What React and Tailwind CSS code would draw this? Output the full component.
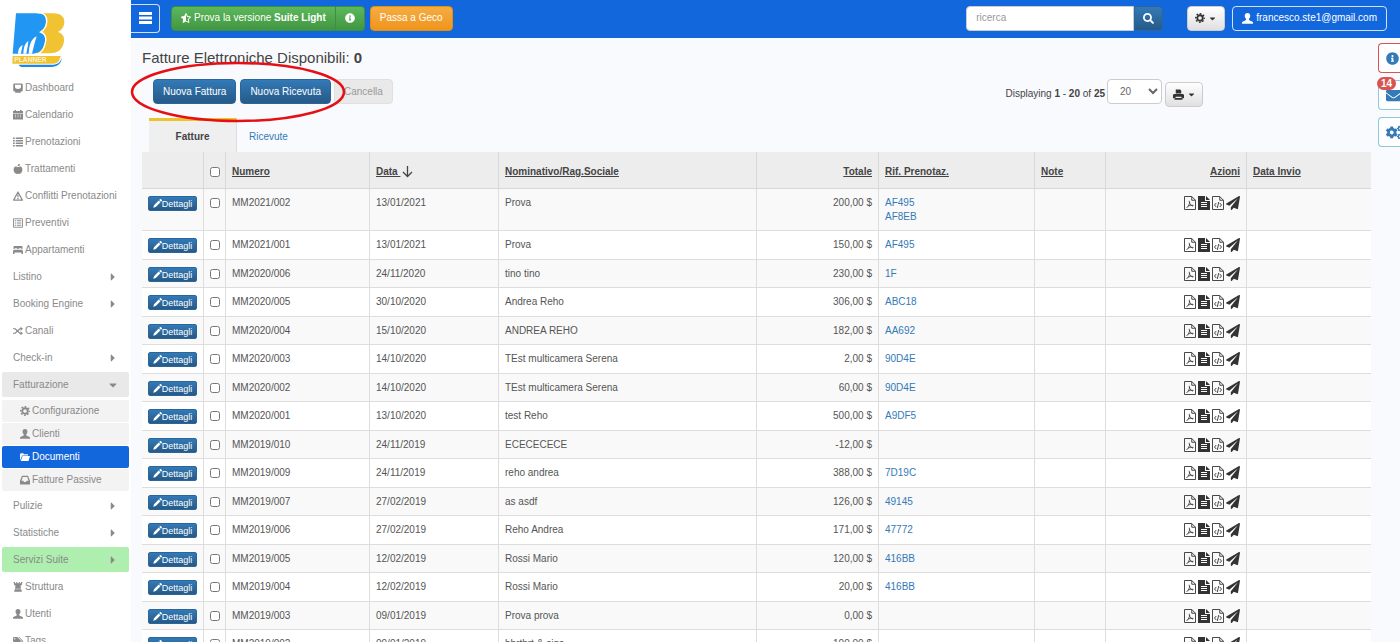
import React, { useState } from "react";
import {
  FaAppleAlt,
  FaCaretDown,
  FaCaretRight,
  FaCogs,
  FaEnvelope,
  FaInfoCircle,
  FaPaperPlane,
  FaSearch,
  FaStarHalfAlt,
  FaTags,
} from "react-icons/fa";

const Glyph = ({ size = 11, children }) => (
  <svg width={size} height={size} viewBox="0 0 20 20" fill="currentColor" className="shrink-0">
    {children}
  </svg>
);

const GearIcon = ({ size }) => (
  <Glyph size={size}>
    <g fill="none" stroke="currentColor">
      <circle cx="10" cy="10" r="5.500" strokeWidth="3.600" />
      <circle cx="10" cy="10" r="8.500" strokeWidth="3" strokeDasharray="3.4 3.276" strokeDashoffset="1.7" />
    </g>
  </Glyph>
);

const UserIcon = ({ size }) => (
  <Glyph size={size}>
    <path d="M10 0c3.100 0 5 2.200 5 5.200 0 2.400-1.100 4.400-2.400 5.400v1.800c0 .8 1.200 1.200 3.200 2 2.500 1 4.200 1.500 4.200 3V19.500H0v-2.100c0-1.500 1.700-2 4.200-3 2-.8 3.200-1.200 3.200-2v-1.800C6.100 9.600 5 7.600 5 5.200 5 2.200 6.900 0 10 0z" />
  </Glyph>
);

const DashboardIcon = ({ size }) => (
  <Glyph size={size}>
    <path
      fillRule="evenodd"
      d="M3 1h14a2.500 2.500 0 0 1 2.500 2.500v11A2.500 2.500 0 0 1 17 17h-2l1 2.500H4L5 17H3a2.500 2.500 0 0 1-2.500-2.500v-11A2.500 2.500 0 0 1 3 1zm1 2.500v4.500c0 2.500 2.500 4 6 4s6-1.500 6-4V3.500z"
    />
  </Glyph>
);

const CalendarIcon = ({ size }) => (
  <Glyph size={size}>
    <path d="M0 2h3V0h3v2h8V0h3v2h3v4.500H0z" />
    <path
      fillRule="evenodd"
      d="M0 7.500h20V19H0zM4 9.500v1.500h2V9.500zm5 0v1.500h2V9.500zm5 0v1.500h2V9.500zM4 13v1.500h2V13zm5 0v1.500h2V13zm5 0v1.500h2V13z"
    />
  </Glyph>
);

const ListIcon = ({ size }) => (
  <Glyph size={size}>
    <path d="M0 1h3.500v3H0zM5.500 1H20v3H5.500zM0 6h3.500v3H0zM5.500 6H20v3H5.500zM0 11h3.500v3H0zM5.500 11H20v3H5.500zM0 16h3.500v3H0zM5.500 16H20v3H5.500z" />
  </Glyph>
);

const WarningIcon = ({ size }) => (
  <Glyph size={size}>
    <path d="M10 2 18.800 18.200H1.200z" fill="none" stroke="currentColor" strokeWidth="2.400" strokeLinejoin="round" />
    <path d="M8.500 7h3l-.6 6H9.100zM8.700 14h2.600v2.600H8.700z" />
  </Glyph>
);

const ListAltIcon = ({ size }) => (
  <Glyph size={size}>
    <path d="M1 1.500h18v17H1z" fill="none" stroke="currentColor" strokeWidth="1.800" />
    <path d="M3.500 4.500h3v2.200h-3zM8 4.500h8.500v2.200H8zM3.500 8.900h3v2.200h-3zM8 8.900h8.500v2.200H8zM3.500 13.300h3v2.200h-3zM8 13.300h8.500v2.200H8z" />
  </Glyph>
);

const BedIcon = ({ size }) => (
  <Glyph size={size}>
    <path d="M2.500 2h15A1.500 1.500 0 0 1 19 3.500V8h-2V6.500h-5.500V8h-3V6.500H3V8H1V3.500A1.500 1.500 0 0 1 2.500 2zM1.500 9.500h17l1.500 3V18h-3v-3H3v3H0v-5.500z" />
  </Glyph>
);

const ShuffleIcon = ({ size }) => (
  <Glyph size={size}>
    <path d="M0 5.500h4.500l9 9H16M0 14.500h4.500l9-9H16" fill="none" stroke="currentColor" strokeWidth="2.400" />
    <path d="M15 1.500 20 5.500l-5 4zM15 10.500l5 4-5 4z" />
  </Glyph>
);

const FolderOpenIcon = ({ size }) => (
  <Glyph size={size}>
    <path d="M0 17V4.500L1.500 2.500h5L8 4.500h8V7H4.500z" />
    <path d="M5.300 8.200H20L17 18H1.500z" />
  </Glyph>
);

const InboxIcon = ({ size }) => (
  <Glyph size={size}>
    <path fillRule="evenodd" d="M4 1.500h12l4 10V19H0v-7.500zM5.500 4 3 11.500h3.500L8 14h4l1.500-2.500H17L14.500 4z" />
  </Glyph>
);

const TowerIcon = ({ size }) => (
  <Glyph size={size}>
    <path d="M1 0h3v2.500h2.500V0h2v2.500h3V0h2v2.500H16V0h3l-1.500 6-2.500 1.500 1 6H4l1-6L2.500 6zM4 14.500h12l1.500 2.500v2.500h-15V17z" />
  </Glyph>
);

const PencilIcon = ({ size }) => (
  <Glyph size={size}>
    <path d="M15.500.5c.7-.6 1.500-.6 2.200 0l1.800 1.800c.6.7.6 1.500 0 2.200l-1.800 1.800-4-4zM12.600 3.400l4 4L6.200 17.800.500 19.500l1.700-5.700z" />
  </Glyph>
);

const PrintIcon = ({ size }) => (
  <Glyph size={size}>
    <path d="M5 1h8l2 2v5H5zM1.500 9h17L20 11v6h-3.500l1 2.500h-15l1-2.500H0v-6z" />
    <path d="M5 14h10l.8 2.500H4.200z" fill="#eee" />
  </Glyph>
);

const BarsIcon = () => (
  <svg width="13" height="12" viewBox="0 0 13 12" fill="currentColor">
    <path d="M0 0h13v3H0zM0 4.500h13v3H0zM0 9h13v3H0z" />
  </svg>
);

// 12x14 document icons
const FileOutline = ({ children }) => (
  <svg width="12" height="14" viewBox="0 0 24 28" fill="none" stroke="currentColor">
    <path d="M1 1h14.500l7.500 7.500V27H1zM15.500 1.200v7.300h7.200" strokeWidth="1.800" strokeLinejoin="round" />
    {children}
  </svg>
);

const FilePdfIcon = () => (
  <FileOutline>
    <path
      d="M10.500 9.500c-.3 4 1.500 8.500 7.500 11M11.500 12c-.5 4.500-3 9-6.500 12M7.500 20.500c3-1.500 7-2.200 11.500-1.700"
      strokeWidth="1.600"
    />
  </FileOutline>
);

const FileCodeIcon = () => (
  <FileOutline>
    <path d="M8.500 14 5 18l3.500 4M15.500 14l3.500 4-3.500 4M13.500 12l-3 12" strokeWidth="1.800" />
  </FileOutline>
);

const FileTextIcon = () => (
  <svg width="12" height="14" viewBox="0 0 24 28" fill="currentColor">
    <path fillRule="evenodd" d="M0 0h14v10h10v18H0zM6 12v2h12v-2zm0 4v2h12v-2zm0 4v2h12v-2z" />
    <path d="M16 0l8 8h-8z" />
  </svg>
);

const Logo = () => (
  <svg width="54" height="56" viewBox="36 36 162 168">
    <path d="M116 40h44c24 0 34 12 33 28-1 13-8 22-20 28 14 4 21 13 19 28-3 23-18 36-42 36h-40z" fill="#f1c232" />
    <path
      d="M48 40h62c22 0 30 10 28 27-1 13-8 23-20 29 13 4 19 13 17 27-3 24-16 38-40 38H38z"
      fill="#2196f3"
    />
    <path
      d="M112 38c22 0 30 12 28 29-1 13-8 23-18 29 11 4 17 13 15 27-3 24-12 34-24 39"
      fill="none"
      stroke="#fff"
      strokeWidth="4"
    />
    <path
      d="M54 161c1-12 3-20 14-26-2 10-4 18-5 26zM70 161c1-18 4-30 15-38-1 14-4 26-6 38zM86 161c2-24 5-42 24-52-6 18-10 36-14 52z"
      fill="#fff"
    />
    <path d="M38 168h144c-4 17-10 23-22 23H37z" fill="#f1c232" />
    <path d="M56 194h104c14 0 22-8 26-22-2 20-14 29-32 29H68c-6 0-10-3-12-7z" fill="#1e88e5" />
    <text x="43" y="187" fontSize="20" fontWeight="700" fill="#fff" fillOpacity=".8">
      PLANNER
    </text>
  </svg>
);

const MENU = [
  { label: "Dashboard", icon: DashboardIcon },
  { label: "Calendario", icon: CalendarIcon },
  { label: "Prenotazioni", icon: ListIcon },
  { label: "Trattamenti", icon: FaAppleAlt },
  { label: "Conflitti Prenotazioni", icon: WarningIcon },
  { label: "Preventivi", icon: ListAltIcon },
  { label: "Appartamenti", icon: BedIcon },
  { label: "Listino", expandable: true },
  { label: "Booking Engine", expandable: true },
  { label: "Canali", icon: ShuffleIcon },
  { label: "Check-in", expandable: true },
  {
    label: "Fatturazione",
    children: [
      { label: "Configurazione", icon: GearIcon },
      { label: "Clienti", icon: UserIcon },
      { label: "Documenti", icon: FolderOpenIcon, active: true },
      { label: "Fatture Passive", icon: InboxIcon },
    ],
  },
  { label: "Pulizie", expandable: true },
  { label: "Statistiche", expandable: true },
  { label: "Servizi Suite", expandable: true, highlight: true },
  { label: "Struttura", icon: TowerIcon },
  { label: "Utenti", icon: UserIcon },
  { label: "Tags", icon: FaTags },
];

const DOCUMENTS = [
  { number: "MM2021/002", date: "13/01/2021", name: "Prova", total: "200,00 $", refs: ["AF495", "AF8EB"] },
  { number: "MM2021/001", date: "13/01/2021", name: "Prova", total: "150,00 $", refs: ["AF495"] },
  { number: "MM2020/006", date: "24/11/2020", name: "tino tino", total: "230,00 $", refs: ["1F"] },
  { number: "MM2020/005", date: "30/10/2020", name: "Andrea Reho", total: "306,00 $", refs: ["ABC18"] },
  { number: "MM2020/004", date: "15/10/2020", name: "ANDREA REHO", total: "182,00 $", refs: ["AA692"] },
  { number: "MM2020/003", date: "14/10/2020", name: "TEst multicamera Serena", total: "2,00 $", refs: ["90D4E"] },
  { number: "MM2020/002", date: "14/10/2020", name: "TEst multicamera Serena", total: "60,00 $", refs: ["90D4E"] },
  { number: "MM2020/001", date: "13/10/2020", name: "test Reho", total: "500,00 $", refs: ["A9DF5"] },
  { number: "MM2019/010", date: "24/11/2019", name: "ECECECECE", total: "-12,00 $", refs: [] },
  { number: "MM2019/009", date: "24/11/2019", name: "reho andrea", total: "388,00 $", refs: ["7D19C"] },
  { number: "MM2019/007", date: "27/02/2019", name: "as asdf", total: "126,00 $", refs: ["49145"] },
  { number: "MM2019/006", date: "27/02/2019", name: "Reho Andrea", total: "171,00 $", refs: ["47772"] },
  { number: "MM2019/005", date: "12/02/2019", name: "Rossi Mario", total: "120,00 $", refs: ["416BB"] },
  { number: "MM2019/004", date: "12/02/2019", name: "Rossi Mario", total: "20,00 $", refs: ["416BB"] },
  { number: "MM2019/003", date: "09/01/2019", name: "Prova prova", total: "0,00 $", refs: [] },
  { number: "MM2019/002", date: "09/01/2019", name: "hbrtbrt & sigs", total: "100,00 $", refs: [] },
];

const blueButton = "bg-linear-to-b from-[#337ab7] to-[#265a88] text-white border border-[#2b669a]";
const grayButton = "border border-[#ccc] bg-linear-to-b from-white to-[#e0e0e0] text-[#333]";
const cell = "border-b border-r border-[#ddd] px-[6px] pt-[7px] align-top last:border-r-0";
const headCell = "border-b border-r border-[#d8d8d8] px-[6px] pt-[3px] font-bold align-middle last:border-r-0";

const Sidebar = () => (
  <aside className="w-[131px] shrink-0 bg-white text-[#8a8a8a]">
    <a href="#home" className="block h-[75px] pt-3 pl-3" aria-label="Planner">
      <Logo />
    </a>
    <nav>
      <ul className="flex flex-col gap-[2px] px-[2px]">
        {MENU.map(({ label, icon: Icon, expandable, highlight, children }) => (
          <li key={label}>
            <a
              href="#menu"
              className={`flex h-[25px] items-center rounded-xs pl-[11px] pr-[10px] ${
                highlight ? "bg-[#aeeeae]" : children ? "bg-[#e9e9e9]" : ""
              }`}
            >
              {Icon && (
                <span className="flex w-3 shrink-0">
                  <Icon size={10} />
                </span>
              )}
              <span className="whitespace-nowrap">{label}</span>
              {expandable && <FaCaretRight size={12} className="ml-auto" />}
              {children && <FaCaretDown size={12} className="ml-auto" />}
            </a>
            {children && (
              <ul className="flex flex-col gap-px pt-[3px]">
                {children.map(({ label: childLabel, icon: ChildIcon, active }) => (
                  <li key={childLabel}>
                    <a
                      href="#submenu"
                      className={`flex h-[22px] items-center rounded-xs pl-[18px] ${
                        active ? "bg-[#1367dc] text-white" : "bg-[#f3f3f3]"
                      }`}
                    >
                      <span className="flex w-3 shrink-0">
                        <ChildIcon size={10} />
                      </span>
                      {childLabel}
                    </a>
                  </li>
                ))}
              </ul>
            )}
          </li>
        ))}
      </ul>
    </nav>
  </aside>
);

const TopBar = () => (
  <header className="flex h-[38px] items-center bg-[#1367dc] pb-[2px] pr-[13px] text-white">
    <button
      aria-label="Menu"
      className="flex h-[29px] w-[29px] items-center justify-center rounded-r-sm border border-l-0 border-white/80"
    >
      <BarsIcon />
    </button>
    <div className="ml-[11px] flex h-[25px]">
      <button className="flex items-center gap-[3px] rounded-l-sm border border-[#3e8f3e] bg-linear-to-b from-[#5cb85c] to-[#419641] px-[9px]">
        <FaStarHalfAlt size={10} />
        <span>
          Prova la versione <b>Suite Light</b>
        </span>
      </button>
      <button
        aria-label="Informazioni"
        className="flex w-[29px] items-center justify-center rounded-r-sm border border-l-0 border-[#3e8f3e] bg-linear-to-b from-[#5cb85c] to-[#419641]"
      >
        <FaInfoCircle size={10} />
      </button>
    </div>
    <button className="ml-[5px] h-[25px] rounded-sm border border-[#e38d13] bg-linear-to-b from-[#f4ad40] to-[#f0941a] px-[9px]">
      Passa a Geco
    </button>
    <form className="ml-auto flex h-[25px]" onSubmit={(e) => e.preventDefault()}>
      <input
        type="text"
        aria-label="ricerca"
        placeholder="ricerca"
        className="w-[168px] rounded-l-sm border border-[#ccc] bg-white px-[9px] text-[#555] placeholder:text-[#999]"
      />
      <button aria-label="Cerca" className={`flex w-[29px] items-center justify-center rounded-r-sm ${blueButton}`}>
        <FaSearch size={11} />
      </button>
    </form>
    <button
      aria-label="Impostazioni"
      className={`ml-6 flex h-[25px] w-[38px] items-center justify-center gap-[3px] rounded-sm ${grayButton}`}
    >
      <GearIcon size={10} />
      <FaCaretDown size={9} />
    </button>
    <button className="ml-[7px] flex h-[25px] items-center gap-[3px] rounded-sm border border-white/80 px-[9px]">
      <UserIcon size={11} />
      francesco.ste1@gmail.com
    </button>
  </header>
);

const SideTabs = () => (
  <div className="absolute top-[43px] right-0 flex w-[22px] flex-col gap-[7px] text-[#337ab7]">
    <button
      aria-label="Informazioni"
      className="flex h-[30px] items-center overflow-hidden rounded-l-sm border border-r-0 border-[#d9534f] bg-white pl-[7px]"
    >
      <FaInfoCircle size={13} className="shrink-0" />
    </button>
    <button
      aria-label="Messaggi"
      className="relative h-[30px] rounded-l-sm border border-r-0 border-[#8cc8de] bg-white"
    >
      <span className="flex overflow-hidden pl-[7px]">
        <FaEnvelope size={15} className="shrink-0" />
      </span>
      <span className="absolute -top-[4px] -left-[2px] h-[13px] w-[19px] rounded-full bg-[#d9534f] text-center leading-[13px] font-bold text-white">
        14
      </span>
    </button>
    <button
      aria-label="Configurazione"
      className="flex h-[30px] items-center overflow-hidden rounded-l-sm border border-r-0 border-[#8cc8de] bg-white pl-[7px]"
    >
      <FaCogs size={17} className="shrink-0" />
    </button>
  </div>
);

const DocumentsTable = () => (
  <table className="w-full table-fixed border-separate border-spacing-0 text-[#555]">
    <colgroup>
      <col className="w-[62px]" />
      <col className="w-[22px]" />
      <col className="w-[144px]" />
      <col className="w-[129px]" />
      <col />
      <col className="w-[122px]" />
      <col className="w-[156px]" />
      <col className="w-[71px]" />
      <col className="w-[141px]" />
      <col className="w-[124px]" />
    </colgroup>
    <thead>
      <tr className="h-[37px] bg-[#ededed] text-left text-[#444]">
        <th className={headCell}></th>
        <th className={headCell}>
          <input type="checkbox" aria-label="Seleziona tutti" className="block size-[10px]" />
        </th>
        <th className={headCell}>
          <a href="#numero" className="underline">Numero</a>
        </th>
        <th className={headCell}>
          <a href="#data" className="flex items-center gap-[2px]">
            <span className="underline">Data&nbsp;</span>
            <svg width="11" height="12" viewBox="0 0 11 12" fill="none" stroke="currentColor" strokeWidth="1.3">
              <path d="M5.500 0v10.500M1 6l4.500 4.500L10 6" />
            </svg>
          </a>
        </th>
        <th className={headCell}>
          <a href="#nominativo" className="underline">Nominativo/Rag.Sociale</a>
        </th>
        <th className={`${headCell} text-right`}>
          <a href="#totale" className="underline">Totale</a>
        </th>
        <th className={headCell}>
          <a href="#prenotazione" className="underline">Rif. Prenotaz.</a>
        </th>
        <th className={headCell}>
          <a href="#note" className="underline">Note</a>
        </th>
        <th className={`${headCell} text-right`}>
          <a href="#azioni" className="underline">Azioni</a>
        </th>
        <th className={headCell}>
          <a href="#invio" className="underline">Data Invio</a>
        </th>
      </tr>
    </thead>
    <tbody>
      {DOCUMENTS.map((doc) => (
        <tr key={doc.number} className="h-[28px] bg-white odd:bg-[#f9f9f9] even:h-[29px]">
          <td className={cell}>
            <button
              className={`flex h-[15px] w-[49px] items-center justify-center rounded-xs text-[9px] ${blueButton}`}
            >
              <PencilIcon size={9} />
              Dettagli
            </button>
          </td>
          <td className={cell}>
            <input type="checkbox" aria-label={`Seleziona ${doc.number}`} className="mt-[2px] block size-[10px]" />
          </td>
          <td className={cell}>{doc.number}</td>
          <td className={cell}>{doc.date}</td>
          <td className={cell}>{doc.name}</td>
          <td className={`${cell} text-right`}>{doc.total}</td>
          <td className={`${cell} pb-[6px]`}>
            {doc.refs.map((ref) => (
              <a key={ref} href="#prenotazione" className="block text-[#337ab7]">
                {ref}
              </a>
            ))}
          </td>
          <td className={cell}></td>
          <td className={cell}>
            <div className="flex justify-end gap-[2px] text-[#333]">
              <button aria-label="PDF"><FilePdfIcon /></button>
              <button aria-label="Testo"><FileTextIcon /></button>
              <button aria-label="XML"><FileCodeIcon /></button>
              <button aria-label="Invia"><FaPaperPlane size={14} /></button>
            </div>
          </td>
          <td className={cell}></td>
        </tr>
      ))}
    </tbody>
  </table>
);

const App = () => {
  const [pageSize, setPageSize] = useState("20");

  return (
    <div className="relative flex h-screen overflow-hidden bg-[#f9fafd] font-['Liberation_Sans',Arial,sans-serif] text-[10px] leading-[14px] text-[#444]">
      <Sidebar />
      <div className="min-w-0 flex-1">
        <TopBar />
        <main className="pt-[10px] pr-[29px] pl-[11px]">
          <h1 className="text-[15px] leading-[20px]">
            Fatture Elettroniche Disponibili: <b>0</b>
          </h1>

          <div className="relative flex items-start pt-[11px] pr-[168px] pl-[11px]">
            <button className={`h-[25px] rounded-sm px-[9px] ${blueButton}`}>Nuova Fattura</button>
            <button className={`ml-1 h-[25px] rounded-sm px-[9px] ${blueButton}`}>Nuova Ricevuta</button>
            <button disabled className="ml-[3px] h-[25px] rounded-sm border border-[#e0e0e0] bg-[#e9e9e9] px-[9px] text-[#999]">
              Cancella
            </button>
            <div className="ml-auto flex items-start">
              <label htmlFor="page-size" className="mt-2 mr-[2px]">
                Displaying <b>1</b> - <b>20</b> of <b>25</b>
              </label>
              <select
                id="page-size"
                value={pageSize}
                onChange={(e) => setPageSize(e.target.value)}
                className="h-[25px] w-[55px] rounded-sm border border-[#ccc] bg-white pl-2 text-[#666]"
              >
                <option>20</option>
                <option>50</option>
                <option>100</option>
              </select>
              <button
                aria-label="Stampa"
                className={`mt-[3px] ml-[3px] flex h-[25px] w-[38px] items-center justify-center gap-[3px] rounded-sm ${grayButton}`}
              >
                <PrintIcon size={11} />
                <FaCaretDown size={9} />
              </button>
            </div>
            <svg
              className="pointer-events-none absolute -top-[7px] -left-[12px]"
              width="216"
              height="62"
              viewBox="0 0 216 62"
              fill="none"
            >
              <ellipse cx="108" cy="31" rx="106" ry="29" stroke="#e60f14" strokeWidth="2.500" />
            </svg>
          </div>

          <div className="mt-[11px] flex h-[34px] pl-[7px]">
            <a
              href="#fatture"
              className="flex w-[88px] items-center justify-center border-t-3 border-r border-t-[#edc32b] border-r-[#ddd] bg-[#efefef] font-bold"
            >
              Fatture
            </a>
            <a href="#ricevute" className="flex items-center border-t-3 border-transparent px-3 text-[#337ab7]">
              Ricevute
            </a>
          </div>

          <DocumentsTable />
        </main>
      </div>
      <SideTabs />
    </div>
  );
};

export default App;
